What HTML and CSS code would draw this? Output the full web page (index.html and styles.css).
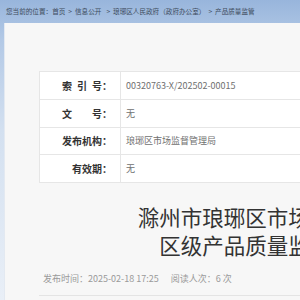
FILE: index.html
```html
<!DOCTYPE html>
<html lang="zh-CN">
<head>
<meta charset="utf-8">
<title>产品质量监管</title>
<link rel="stylesheet" href="styles.css">
</head>
<body>
<div class="crumb">您当前的位置：<a>首页</a><span class="sep">&gt;</span><a>信息公开</a><span class="sep sep-wide">&gt;</span><a>琅琊区人民政府（政府办公室）</a><span class="sep">&gt;</span><a>产品质量监管</a></div>
<div class="panel">
  <div class="wrap">
    <table class="info">
      <tr><td class="lbl">索&ensp;引&ensp;号：</td><td class="val">00320763-X/202502-00015</td></tr>
      <tr><td class="lbl">文&emsp;&emsp;号：</td><td class="val">无</td></tr>
      <tr><td class="lbl">发布机构：</td><td class="val">琅琊区市场监督管理局</td></tr>
      <tr><td class="lbl">有效期：</td><td class="val">无</td></tr>
    </table>
    <h1 class="title">滁州市琅琊区市场监督管理局关于区级产品质量监督抽查的通告</h1>
    <div class="meta"><span>发布时间：2025-02-18 17:25</span><span class="reads">阅读人次：6 次</span></div>
    <div class="rule"></div>
  </div>
</div>
</body>
</html>
```
FILE: styles.css
```css
html, body {
  margin: 0;
  padding: 0;
}
body {
  width: 300px;
  height: 300px;
  overflow: hidden;
  font-family: "Noto Sans CJK SC", "Noto Sans", sans-serif;
  background: linear-gradient(to bottom, #98b5dc 0, #b3c9e6 40px, #d3e0f0 130px, #e9eff7 300px);
}
.crumb {
  height: 23px;
  line-height: 22px;
  padding-left: 6px;
  font-size: 6.6px;
  color: #3d4b5c;
  white-space: nowrap;
}
.crumb a { color: #3d4b5c; }
.sep { margin: 0 3px; }
.sep-wide { margin-left: 5px; }
.panel {
  margin-left: 4px;
  width: 700px;
  height: 277px;
  background: #f7f7f7;
  border-left: 1px solid #e3e9f1;
  padding-top: 48px;
  box-sizing: border-box;
}
.wrap {
  margin-left: 34px;
  width: 520px;
}
.info {
  width: 100%;
  border-collapse: collapse;
  background: #fff;
}
.info td {
  border: 1px solid #e6e6e6;
  height: 27.75px;
  padding: 0;
  box-sizing: border-box;
}
.lbl {
  width: 81px;
  text-align: right;
  padding-right: 8px !important;
  font-size: 10px;
  font-weight: bold;
  color: #333;
  white-space: nowrap;
}
.val {
  padding-left: 5px !important;
  font-size: 9px;
  color: #707070;
}
.title {
  max-width: 330px;
  margin: 20px auto 0;
  font-size: 21.5px;
  line-height: 28px;
  font-weight: normal;
  text-align: center;
  color: #333;
}
.meta {
  margin-top: 12px;
  padding-left: 4px;
  font-size: 9px;
  line-height: 16px;
  color: #9a9a9a;
}
.reads { margin-left: 12px; }
.rule {
  margin-top: 8px;
  border-top: 1px solid #e4e4e4;
}
```
